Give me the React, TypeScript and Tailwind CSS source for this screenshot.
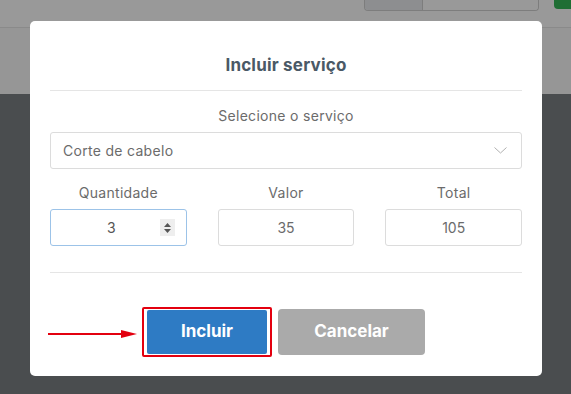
import React from "react";

export default function App() {
  return (
    <div
      className="relative w-[571px] h-[394px] overflow-hidden flex flex-col bg-[#4a4d4f]"
      style={{ fontFamily: "Inter, 'Noto Sans', sans-serif" }}
    >
      {/* page behind the overlay */}
      <div className="h-[28px] bg-[#999999] border-b border-[#8a8a8a] flex items-start">
        <div className="ml-[364px] w-[175px] h-[11px] flex border border-t-0 border-[#7d7d7d] rounded-b-[4px] overflow-hidden">
          <div className="w-[58px] bg-[#8d8e90] border-r border-[#7d7d7d]" />
          <div className="flex-1 bg-[#999999]" />
        </div>
        <div className="ml-[15px] w-[17px] h-[9px] bg-[#1f6e34] rounded-bl-[4px]" />
      </div>
      <div className="h-[66px] bg-[#969696]" />
      <div className="flex-1" />

      {/* modal */}
      <div className="absolute left-[30px] top-[21px] w-[512px] h-[355px] bg-white rounded-[5px] px-[20px]">
        <div className="h-[70px] border-b border-[#e5e5e5] flex items-end justify-center pb-[13px]">
          <h2 className="text-[17px] leading-[24px] font-bold text-[#4a5966] tracking-[0.2px]">Incluir serviço</h2>
        </div>

        <div className="mt-[15px] text-center text-[14px] leading-[20px] text-[#6b6b6b] tracking-[0.3px]">Selecione o serviço</div>
        <div className="mt-[6px] h-[37px] border border-[#dcdcdc] rounded-[3px] flex items-center justify-between pl-[12px] pr-[14px]">
          <span className="text-[14px] text-[#6b6b6b] tracking-[0.3px]">Corte de cabelo</span>
          <svg width="13" height="7" viewBox="0 0 13 7" fill="none">
            <path d="M0.5 0.5L6.5 6L12.5 0.5" stroke="#b0b0b0" strokeWidth="1" />
          </svg>
        </div>

        <div className="mt-[14px] grid grid-cols-3 gap-x-[31px]">
          <div className="text-center text-[14px] leading-[20px] text-[#6b6b6b] tracking-[0.3px]">Quantidade</div>
          <div className="text-center text-[14px] leading-[20px] text-[#6b6b6b] tracking-[0.3px]">Valor</div>
          <div className="text-center text-[14px] leading-[20px] text-[#6b6b6b] tracking-[0.3px]">Total</div>

          <div className="mt-[6px] h-[37px] border border-[#9cc3e8] rounded-[3px] flex items-center pr-[11px]">
            <span className="flex-1 text-center text-[14px] text-[#555] pl-[12px]">3</span>
            <div className="w-[15px] h-[17px] bg-[#eeeeee] flex flex-col items-center justify-center gap-[2px]">
              <svg width="7" height="4" viewBox="0 0 7 4"><path d="M0 4L3.5 0L7 4Z" fill="#555" /></svg>
              <svg width="7" height="4" viewBox="0 0 7 4"><path d="M0 0L3.5 4L7 0Z" fill="#555" /></svg>
            </div>
          </div>
          <div className="mt-[6px] h-[37px] border border-[#dcdcdc] rounded-[3px] flex items-center justify-center text-[14px] text-[#6b6b6b]">
            35
          </div>
          <div className="mt-[6px] h-[37px] border border-[#dcdcdc] rounded-[3px] flex items-center justify-center text-[14px] text-[#6b6b6b]">
            105
          </div>
        </div>

        <div className="mt-[26px] border-t border-[#e5e5e5]" />

        <div className="mt-[34px] flex items-center pl-[92px] gap-[6px]">
          <div className="border-2 border-[#e3000f] rounded-[2px] px-[3px] py-[1px]">
            <button className="w-[120px] h-[44px] bg-[#2e7bc4] rounded-[2px] text-white text-[17px] font-bold">
              Incluir
            </button>
          </div>
          <button className="w-[147px] h-[46px] bg-[#aaaaaa] rounded-[4px] text-white text-[17px] font-bold">
            Cancelar
          </button>
        </div>
      </div>

      {/* annotation arrow */}
      <svg className="absolute left-[48px] top-[329px]" width="90" height="10" viewBox="0 0 90 10">
        <line x1="0" y1="5" x2="76" y2="5" stroke="#e3000f" strokeWidth="2" />
        <path d="M73 1L89 5L73 9Z" fill="#e3000f" />
      </svg>
    </div>
  );
}
